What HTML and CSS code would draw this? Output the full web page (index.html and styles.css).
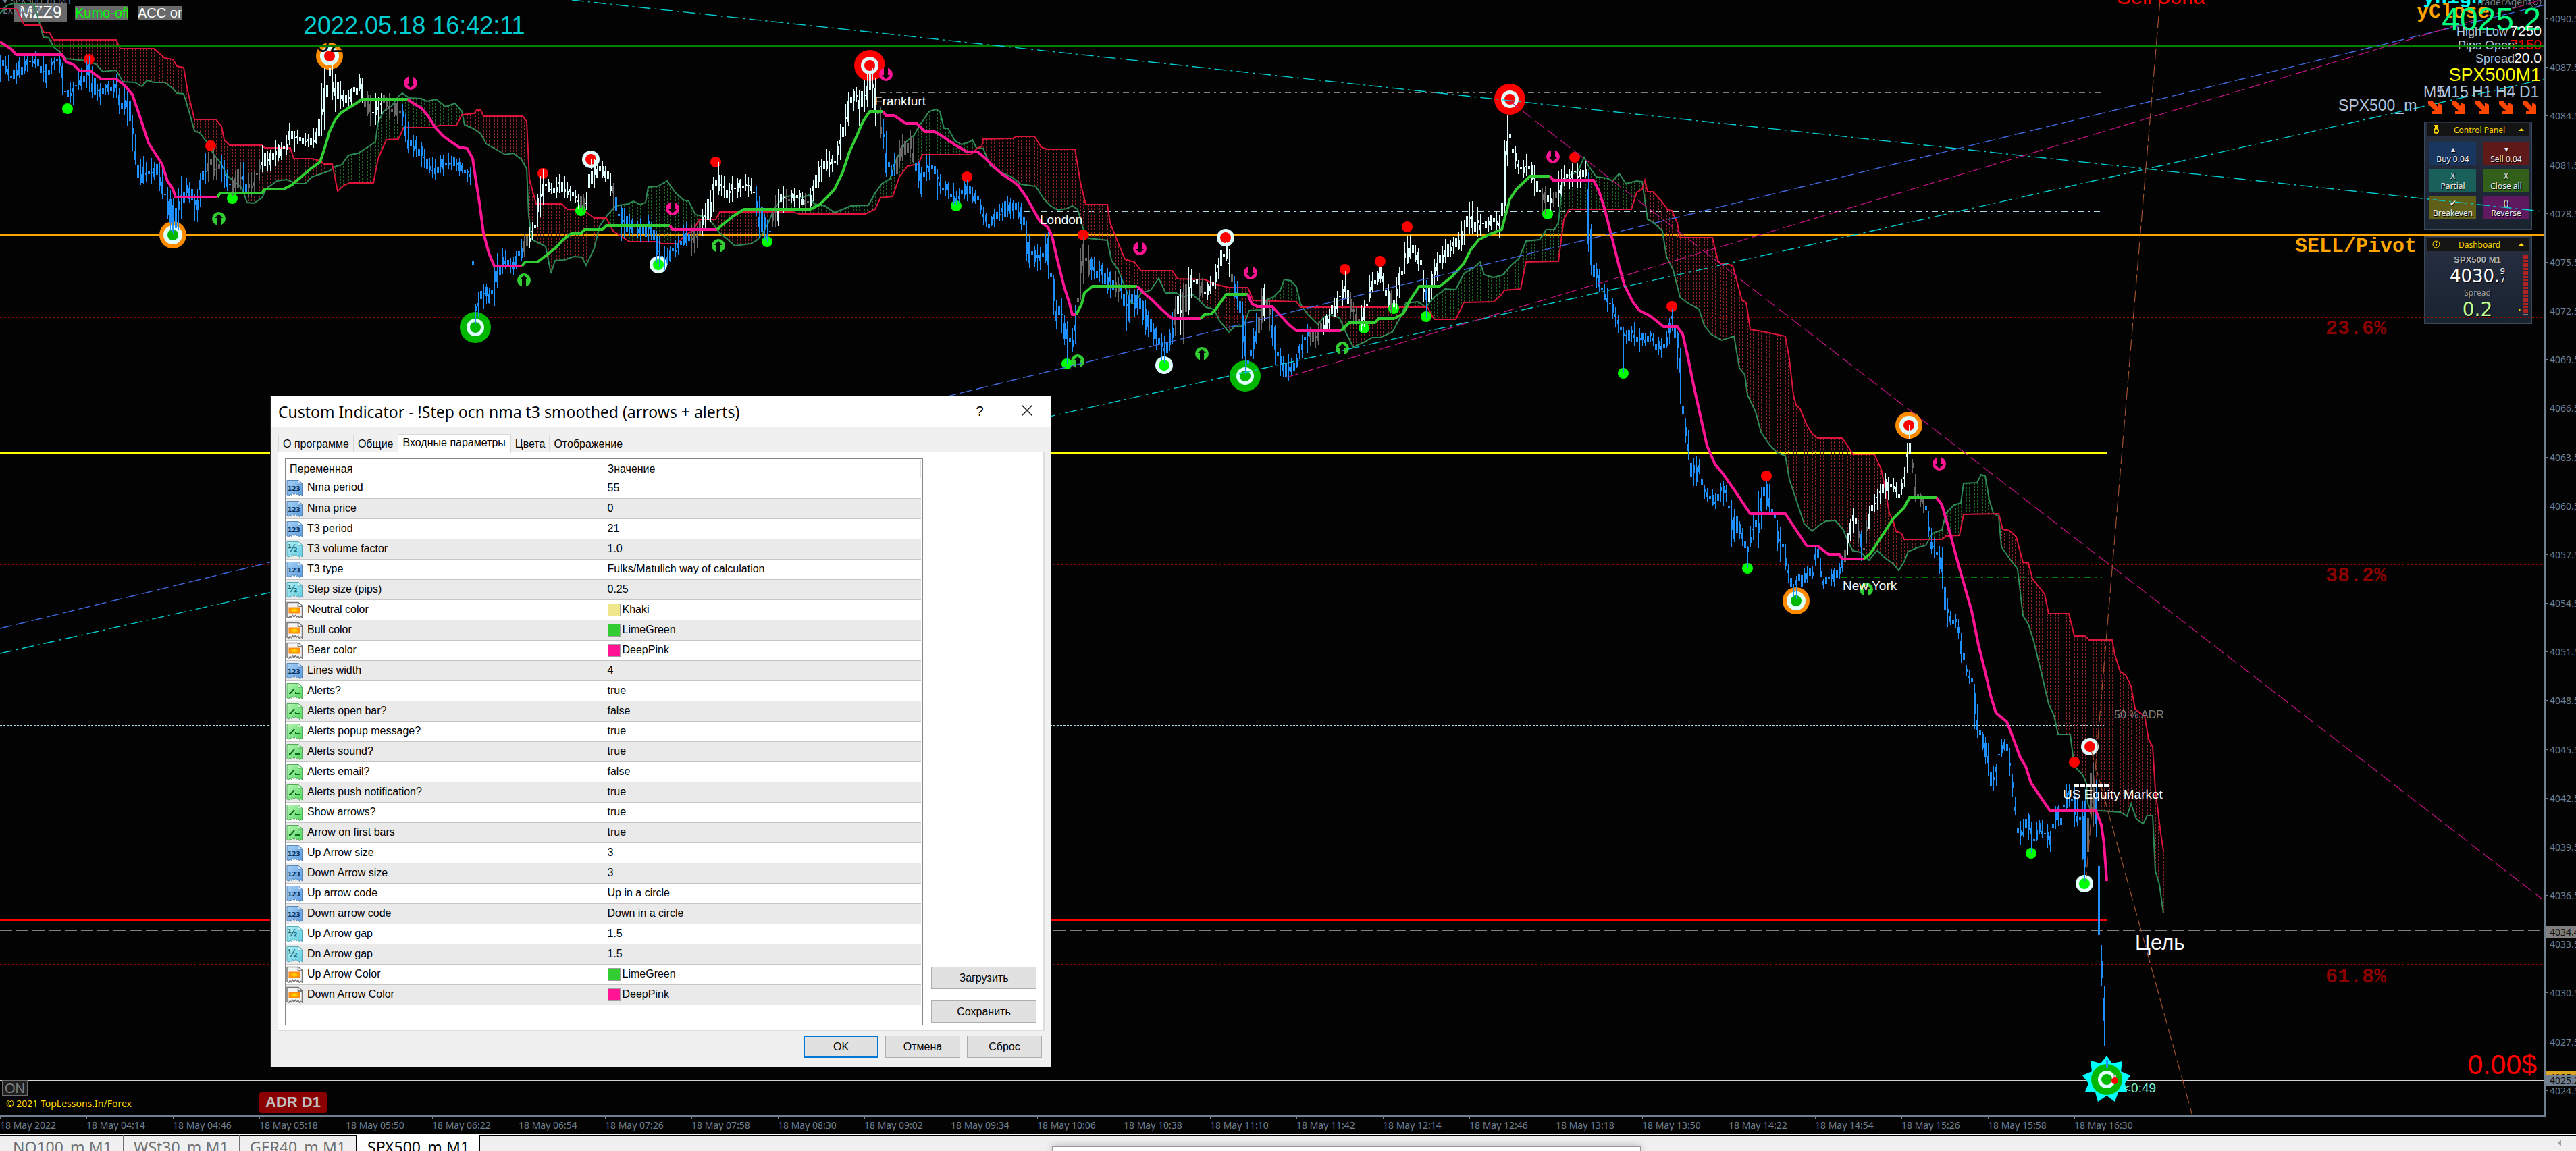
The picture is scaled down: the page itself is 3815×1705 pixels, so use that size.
FILE: index.html
```
<!DOCTYPE html>
<html lang="ru">
<head>
<meta charset="utf-8">
<title>SPX500_m,M1</title>
<link rel="stylesheet" href="styles.css">
</head>
<body>
<svg class="defs" aria-hidden="true">
  <defs>
    <linearGradient id="gb" x1="0" y1="0" x2="1" y2="1"><stop offset="0" stop-color="#a9d2f7"/><stop offset="1" stop-color="#5c9de0"/></linearGradient>
    <linearGradient id="gc" x1="0" y1="0" x2="1" y2="1"><stop offset="0" stop-color="#b4f0f5"/><stop offset="1" stop-color="#62cbe0"/></linearGradient>
    <linearGradient id="gg" x1="0" y1="0" x2="1" y2="1"><stop offset="0" stop-color="#b8f5b4"/><stop offset="1" stop-color="#52d862"/></linearGradient>
    <radialGradient id="go"><stop offset="0" stop-color="#ffe600"/><stop offset="1" stop-color="#ff8a00"/></radialGradient>
    <path id="sheet" d="M1 1.500H18L23.500 6V24L21 22L19.500 24.500L17.500 21L15.500 23L13.500 20.500L11.500 23L9.500 20.500L7.500 23.500L5.500 21.500L4 24L1 23Z"/>
    <symbol id="i-int" viewBox="0 0 25 25"><use href="#sheet" fill="url(#gb)" stroke="#5a86b4"/><path d="M17.500 2V7H23" fill="#d4e8fb" stroke="#5a86b4"/><text class="glyph" x="2" y="17" fill="#0c3358">123</text></symbol>
    <symbol id="i-dbl" viewBox="0 0 25 25"><use href="#sheet" fill="url(#gc)" stroke="#58a9b8"/><path d="M17.500 2V7H23" fill="#d8f6fa" stroke="#58a9b8"/><text class="glyph half" x="2" y="16" fill="#1b6f80">½</text></symbol>
    <symbol id="i-bool" viewBox="0 0 25 25"><use href="#sheet" fill="url(#gg)" stroke="#55a85c"/><path d="M17.500 2V7H23" fill="#dcf8da" stroke="#55a85c"/><path d="M4 16H6L12 9M14 14V16H20" fill="none" stroke="#0f6b1c" stroke-width="2"/></symbol>
    <symbol id="i-clr" viewBox="0 0 25 25"><use href="#sheet" fill="#f4f4f4" stroke="#777" stroke-width="1.500"/><path d="M17.500 2V7H23" fill="#fff" stroke="#555" stroke-width="1.500"/><rect x="4" y="9" width="16" height="8" fill="url(#go)" stroke="#ff8a1c"/></symbol>
    <g id="low"><circle r="8" fill="#00ff00"/></g>
    <g id="high"><circle r="8" fill="#ff0000"/></g>
    <g id="low2"><circle r="13" fill="#e0ffff"/><circle r="8" fill="#00ff00"/></g>
    <g id="high2"><circle r="13" fill="#e0ffff"/><circle r="8" fill="#ff0000"/></g>
    <g id="low3"><circle r="20" fill="#ff8c00"/><circle r="14" fill="#e0ffff"/><circle r="8" fill="#00b800"/></g>
    <g id="high3"><circle r="20" fill="#ff8c00"/><circle r="14" fill="#e0ffff"/><circle r="8" fill="#ff0000"/></g>
    <g id="low4"><circle r="23" fill="#00b800"/><circle r="13" fill="#e0ffff"/><circle r="8" fill="#00b800"/></g>
    <g id="high4"><circle r="23" fill="#ff0000"/><circle r="13" fill="#e0ffff"/><circle r="8" fill="#ff0000"/></g>
    <g id="up"><circle r="10" fill="#32cd32"/><path d="M-3 11V-1H-6L0 -7L6 -1H3V11Z" fill="#030303"/></g>
    <g id="down"><circle r="10" fill="#ff1493"/><path d="M-3 -11V1H-6L0 7L6 1H3V-11Z" fill="#030303"/></g>
    <path id="se" d="M0 0H6L14 9V3L20 6V20H5V15H10L0 5Z" fill="#ff4500"/>
  </defs>
</svg>

<main class="terminal">
  <section class="chart">
    <div class="plot">
      <div class="labels">
        <button class="tag tag-big">MZZ9</button>
        <button class="tag lime">Kumo-off</button>
        <button class="tag acc">ACC on</button>
      </div>

      <div class="panels">
        <section class="panel control">
          <header class="panel-head"><svg class="ico" viewBox="0 0 12 14"><path d="M3 1H9M4 3H8M6 5C10 6 10 12 6 12C2 12 2 6 6 5" fill="none" stroke="#ffd700" stroke-width="2"/></svg><h2>Control Panel</h2><span class="tri"></span></header>
          <div class="actions">
            <button class="buy"><i>▴</i>Buy 0.04</button>
            <button class="sell"><i>▾</i>Sell 0.04</button>
            <button class="partial"><i>X</i>Partial</button>
            <button class="close-all"><i>X</i>Close all</button>
            <button class="even"><i>✔</i>Breakeven</button>
            <button class="reverse"><i>()</i>Reverse</button>
          </div>
        </section>
        <section class="panel dash">
          <header class="panel-head"><svg class="ico" viewBox="0 0 12 14"><circle cx="6" cy="7" r="5" fill="none" stroke="#ffd700"/><path d="M6 3V5M6 6V10" stroke="#ffd700" stroke-width="2"/></svg><h2>Dashboard</h2><span class="tri"></span></header>
          <div class="dash-body">
            <div class="quote">
              <b>SPX500 M1</b>
              <p class="price">4030.<span><em>9</em><em>7</em></span></p>
              <small>Spread</small>
              <strong>0.2</strong>
            </div>
            <span class="marker"></span>
            <div class="meter"></div>
          </div>
        </section>
      </div>

      <svg class="canvas" viewBox="0 0 3768 1652">
        <g class="faint"><text x="4" y="6" class="ui">▾ SPX500_m,M1</text><text x="4" y="20" class="ui">ExtDepth: 21</text></g>
        <g class="levels">
          <path d="M0 348H3769" stroke="#ffa500" stroke-width="4"/>
          <path d="M0 671H3121" stroke="#ffff00" stroke-width="4"/>
          <path d="M0 1363H3121" stroke="#ff0000" stroke-width="4"/>
          <path d="M0 470.500H3769M0 836.500H3769M0 1428.500H3769" stroke="#8b0000" stroke-dasharray="3 3"/>
          <path d="M0 1074.500H3116" stroke="#add8e6" stroke-dasharray="3 2"/>
          <path d="M0 1378.500H3769" stroke="#808080" stroke-dasharray="18 6"/>
          <path d="M0 1595.500H3769" stroke="#daa520"/>
          <path d="M0 1600.500H3769" stroke="#d3d3d3"/>
          <path d="M1303 137.500H3114" stroke="#808080" stroke-dasharray="9 6 3 6"/>
          <path d="M1517 313.500H3114" stroke="#add8e6" stroke-dasharray="9 6 3 6"/>
          <path d="M2727 855.500H3113" stroke="#008000" stroke-dasharray="9 6 3 6"/>
        </g>
        <g id="cloud"></g>
        <g id="lines"></g>
        <g id="marks"></g>
        <path d="M3120 1564L3128 1575L3143 1572L3141 1587L3155 1593L3147 1605L3150 1617L3137 1618L3132 1632L3120 1623L3107 1632L3103 1618L3088 1617L3093 1605L3084 1593L3098 1587L3096 1571L3111 1575Z" fill="#00ffff"/>
        <use href="#low4" x="3120" y="1599"/>
        <path d="M3130 1592H3134V1600H3130Z" fill="#c0c0c0"/><circle cx="3132" cy="1601" r="5" fill="#ff0000"/>
        <g id="candles"></g>
        <text x="448" y="77" class="t36" fill="#030303">2022.05.18 16:42:11</text>
        <path d="M0 68H3769" stroke="#008000" stroke-width="4"/>
        <g id="average"></g>
        <g class="trend">
          <path d="M847 0L3769 313.500M0 968L3769 117" stroke="#00ced1" stroke-width="1.400" stroke-dasharray="18 6 3 6"/>
          <path d="M0 931L3769 7" stroke="#4169e1" stroke-width="1.400" stroke-dasharray="18 6"/>
          <path d="M1905 559L3763 0M2235 149L3765 1332" stroke="#c71585" stroke-width="1.200" stroke-dasharray="18 6"/>
          <path d="M3199 0L3089 1307M3096 1108L3247 1653" stroke="#a0522d" stroke-width="1.200" stroke-dasharray="18 6"/>
        </g>
        <path d="M3071 1164H3123" stroke="#fff" stroke-width="4" stroke-dasharray="8 1"/>
        <text x="450" y="50" class="t36" fill="#00ced1">2022.05.18 16:42:11</text>
        <g class="t19" fill="#fff">
          <text x="1295" y="156">Frankfurt</text><text x="1540" y="332">London</text>
          <text x="2729" y="874">New York</text><text x="3055" y="1183">US Equity Market</text>
        </g>
        <text x="3131" y="1064" class="t16" fill="#808080">50 % ADR</text>
        <text x="3162" y="1407" class="t31" fill="#fff">Цель</text>
        <text x="3135" y="6" class="t31" fill="#ff0000">Sell Зона</text>
        <text x="3145" y="1618" class="t19" fill="#7fffd4">&lt;0:49</text>
        <g class="mono" fill="#8b0000"><text x="3444" y="495">23.6%</text><text x="3444" y="861">38.2%</text><text x="3444" y="1455">61.8%</text></g>
        <g class="mono" fill="#ffa500"><text x="3399" y="373">SELL/Pivot</text><text x="3579" y="26">yClose</text><text x="3588" y="5" fill="#00ffff">yHigh</text></g>
        <text x="3667" y="8" class="ui" fill="#708090">TraderAgent</text>
        <g fill="none" stroke="#708090"><circle cx="3755" cy="3" r="8"/><path d="M3751 4Q3755 10 3759 4M3751 0H3753M3757 0H3759"/></g>
        <text x="3763" y="45" class="t48 end" fill="#00ff7f">4025.2</text>
        <g class="t18" fill="#b0c4de"><text x="3638" y="53">High-Low :</text><text x="3640" y="73">Pips Open:</text><text x="3666" y="93">Spread:</text></g>
        <g class="t21 end" fill="#fff"><text x="3764" y="53">7250</text><text x="3764" y="73" fill="#ff0000">-7150</text><text x="3764" y="93">20.0</text></g>
        <path d="M3630 68H3769" stroke="#008000" stroke-width="3"/>
        <text x="3763" y="120" class="t27 end" fill="#ffff00">SPX500M1</text>
        <g class="t23" fill="#b0c4de"><text x="3589" y="144">M5</text><text x="3611" y="144">M15</text><text x="3661" y="144">H1</text><text x="3696" y="144">H4</text><text x="3731" y="144">D1</text><text x="3463" y="164">SPX500_m</text></g>
        <use href="#se" x="3596" y="149"/><use href="#se" x="3631" y="149"/><use href="#se" x="3666" y="149"/><use href="#se" x="3701" y="149"/><use href="#se" x="3736" y="149"/>
        <text x="3757" y="1591" class="led end" fill="#ff0000">0.00$</text>
      </svg>

      <div class="corner">
        <button class="on">ON</button>
        <p>© 2021 TopLessons.In/Forex</p>
      </div>
      <span class="adr">ADR D1</span>
    </div>
    <aside class="prices">
      <span>4090.5</span><span>4087.5</span><span>4084.5</span><span>4081.5</span><span>4078.5</span><span>4075.5</span><span>4072.5</span><span>4069.5</span><span>4066.5</span><span>4063.5</span><span>4060.5</span><span>4057.5</span><span>4054.5</span><span>4051.5</span><span>4048.5</span><span>4045.5</span><span>4042.5</span><span>4039.5</span><span>4036.5</span><span>4033.5</span><span>4030.5</span><span>4027.5</span><span>4024.5</span>
      <mark class="level">4034.4</mark>
      <mark class="pending">4025.6</mark>
      <mark class="bid">4025.2</mark>
    </aside>
  </section>
  <div class="times">
    <span>18 May 2022</span><span>18 May 04:14</span><span>18 May 04:46</span><span>18 May 05:18</span><span>18 May 05:50</span><span>18 May 06:22</span><span>18 May 06:54</span><span>18 May 07:26</span><span>18 May 07:58</span><span>18 May 08:30</span><span>18 May 09:02</span><span>18 May 09:34</span><span>18 May 10:06</span><span>18 May 10:38</span><span>18 May 11:10</span><span>18 May 11:42</span><span>18 May 12:14</span><span>18 May 12:46</span><span>18 May 13:18</span><span>18 May 13:50</span><span>18 May 14:22</span><span>18 May 14:54</span><span>18 May 15:26</span><span>18 May 15:58</span><span>18 May 16:30</span>
  </div>
  <nav class="charts">
    <a href="#nq">NQ100_m,M1</a><a href="#ws">WSt30_m,M1</a><a href="#ger">GER40_m,M1</a><a href="#spx" class="current">SPX500_m,M1</a>
    <span class="scroll"></span>
  </nav>
  <div class="popup"></div>
</main>

<form class="dialog" role="dialog" aria-labelledby="dlg-title">
  <header class="dlg-head">
    <h1 id="dlg-title">Custom Indicator - !Step ocn nma t3 smoothed (arrows + alerts)</h1>
    <button type="button" class="win">?</button>
    <button type="button" class="win" aria-label="Закрыть"><svg viewBox="0 0 16 16" width="16" height="16"><path d="M0 0L16 16M16 0L0 16" stroke="#111" stroke-width="1.500"/></svg></button>
  </header>
  <div class="dlg-tabs" role="tablist">
    <button type="button" role="tab">О программе</button><button type="button" role="tab">Общие</button><button type="button" role="tab" aria-selected="true">Входные параметры</button><button type="button" role="tab">Цвета</button><button type="button" role="tab">Отображение</button>
  </div>
  <div class="dlg-page">
    <div class="list">
      <table>
        <thead><tr><th>Переменная</th><th>Значение</th></tr></thead>
        <tbody>
          <tr><td><svg><use href="#i-int"/></svg>Nma period</td><td>55</td></tr>
          <tr><td><svg><use href="#i-int"/></svg>Nma price</td><td>0</td></tr>
          <tr><td><svg><use href="#i-int"/></svg>T3 period</td><td>21</td></tr>
          <tr><td><svg><use href="#i-dbl"/></svg>T3 volume factor</td><td>1.0</td></tr>
          <tr><td><svg><use href="#i-int"/></svg>T3 type</td><td>Fulks/Matulich way of calculation</td></tr>
          <tr><td><svg><use href="#i-dbl"/></svg>Step size (pips)</td><td>0.25</td></tr>
          <tr><td><svg><use href="#i-clr"/></svg>Neutral color</td><td><i class="sw khaki"></i>Khaki</td></tr>
          <tr><td><svg><use href="#i-clr"/></svg>Bull color</td><td><i class="sw green"></i>LimeGreen</td></tr>
          <tr><td><svg><use href="#i-clr"/></svg>Bear color</td><td><i class="sw pink"></i>DeepPink</td></tr>
          <tr><td><svg><use href="#i-int"/></svg>Lines width</td><td>4</td></tr>
          <tr><td><svg><use href="#i-bool"/></svg>Alerts?</td><td>true</td></tr>
          <tr><td><svg><use href="#i-bool"/></svg>Alerts open bar?</td><td>false</td></tr>
          <tr><td><svg><use href="#i-bool"/></svg>Alerts popup message?</td><td>true</td></tr>
          <tr><td><svg><use href="#i-bool"/></svg>Alerts sound?</td><td>true</td></tr>
          <tr><td><svg><use href="#i-bool"/></svg>Alerts email?</td><td>false</td></tr>
          <tr><td><svg><use href="#i-bool"/></svg>Alerts push notification?</td><td>true</td></tr>
          <tr><td><svg><use href="#i-bool"/></svg>Show arrows?</td><td>true</td></tr>
          <tr><td><svg><use href="#i-bool"/></svg>Arrow on first bars</td><td>true</td></tr>
          <tr><td><svg><use href="#i-int"/></svg>Up Arrow size</td><td>3</td></tr>
          <tr><td><svg><use href="#i-int"/></svg>Down Arrow size</td><td>3</td></tr>
          <tr><td><svg><use href="#i-int"/></svg>Up arrow code</td><td>Up in a circle</td></tr>
          <tr><td><svg><use href="#i-int"/></svg>Down arrow code</td><td>Down in a circle</td></tr>
          <tr><td><svg><use href="#i-dbl"/></svg>Up Arrow gap</td><td>1.5</td></tr>
          <tr><td><svg><use href="#i-dbl"/></svg>Dn Arrow gap</td><td>1.5</td></tr>
          <tr><td><svg><use href="#i-clr"/></svg>Up Arrow Color</td><td><i class="sw green"></i>LimeGreen</td></tr>
          <tr><td><svg><use href="#i-clr"/></svg>Down Arrow Color</td><td><i class="sw pink"></i>DeepPink</td></tr>
        </tbody>
      </table>
    </div>
    <div class="side"><button type="button" class="btn">Загрузить</button><button type="button" class="btn">Сохранить</button></div>
  </div>
  <footer class="dlg-foot"><button type="submit" class="btn primary">OK</button><button type="button" class="btn">Отмена</button><button type="reset" class="btn">Сброс</button></footer>
</form>
<script src="chart.js"></script>
</body>
</html>
```
FILE: styles.css
```
* { box-sizing: border-box; }
html, body { height: 100%; }
body { margin: 0; background: #030303; font-family: "Liberation Sans", Arial, sans-serif; overflow: hidden; }
h1, h2, p { margin: 0; font-weight: normal; }
button { font: inherit; border: 0; padding: 0; }
.defs { position: absolute; width: 0; height: 0; }

.terminal { position: relative; display: flex; flex-direction: column; height: 100%; }
.chart { display: flex; flex: 1; min-height: 0; }
.plot { position: relative; flex: 1; min-width: 0; border-right: 2px solid #708090; border-bottom: 2px solid #708090; overflow: hidden; }
.canvas { position: absolute; left: 0; top: 0; width: 100%; height: 100%; pointer-events: none; }
.levels path, .trend path { fill: none; }

.t16 { font-size: 16px; }
.t18 { font-size: 18px; }
.t19 { font-size: 19px; }
.t21 { font-size: 21px; }
.t23 { font-size: 23px; }
.t27 { font-size: 27px; }
.t31 { font-size: 31px; }
.t36 { font-size: 36px; }
.t48 { font-size: 48px; }
.end { text-anchor: end; }
.mono { font: bold 30px "Liberation Mono", "Courier New", monospace; }
.ui { font: 14px "Noto Sans", Tahoma, sans-serif; }
.led { font: 41px "Liberation Sans", sans-serif; }
.faint { fill: #708090; }
.glyph { font: bold 9px "DejaVu Sans", sans-serif; }
.half { font-size: 14px; }

.labels { position: absolute; left: 21px; top: 4px; display: flex; align-items: flex-start; gap: 12px; }
.tag { width: 78px; height: 20px; margin-top: 5px; overflow: hidden; background: #696969; color: #fff; font-size: 20px; line-height: 20px; white-space: nowrap; text-align: left; }
.tag-big { height: 28px; margin-top: 0; font-size: 24px; line-height: 28px; text-align: center; }
.lime { color: #00ff00; }
.acc { width: 65px; margin-left: 3px; }

.panels { position: absolute; right: 18px; top: 180px; width: 160px; display: flex; flex-direction: column; gap: 10px; font-family: "Noto Sans", Tahoma, sans-serif; }
.panel { border: 1px solid #3a4a5e; background: linear-gradient(#272f42, #1a2330); padding: 1px 4px; }
.control { height: 160px; }
.dash { height: 130px; }
.panel-head { display: flex; align-items: center; height: 20px; padding: 0 7px; background: #141414; color: #ffd700; }
.panel-head h2 { flex: 1; text-align: center; font-size: 12px; }
.ico { width: 12px; height: 14px; }
.tri { border: 4px solid transparent; border-top: 0; border-bottom-color: #ffd700; }
.actions { display: grid; grid-template-columns: 1fr 1fr; grid-auto-rows: 35px; column-gap: 10px; row-gap: 5px; padding: 8px 0 0 3px; margin-right: -1px; }
.actions button { display: flex; flex-direction: column; align-items: center; justify-content: center; color: #eee; font-size: 12px; line-height: 15px; white-space: nowrap; text-shadow: 1px 1px #000; }
.actions i { font-style: normal; }
.buy { background: #19365f; }
.sell { background: #5f1919; }
.partial { background: #195f5a; }
.close-all { background: #325f19; }
.even { background: #5f5f19; }
.reverse { background: #5f195f; }
.dash-body { display: flex; padding: 5px 1px 0 0; }
.quote { flex: 1; display: flex; flex-direction: column; align-items: center; padding-left: 13px; text-shadow: 1px 1px #000; }
.quote b { color: #b0b0b0; font: bold 13px/16px "Liberation Sans", sans-serif; }
.price { display: flex; align-items: center; color: #fff; font: 26px/26px "DejaVu Sans", sans-serif; margin-top: 3px; }
.price span { display: flex; flex-direction: column; font-size: 12px; line-height: 13px; }
.price em { font-style: normal; }
.quote small { color: #a0a0a0; font-size: 12px; line-height: 16px; margin-top: 4px; }
.quote strong { color: #c0ff90; font: 28px/30px "DejaVu Sans", sans-serif; margin-top: 2px; }
.marker { align-self: flex-end; margin-bottom: 12px; border: 3px solid transparent; border-right: 0; border-left-color: #ffd700; }
.meter { width: 8px; height: 90px; margin-left: 3px; background: repeating-linear-gradient(#b22222 0 3px, #1f2837 3px 4px); border-bottom: 2px solid #808080; }

.corner { position: absolute; left: 3px; top: 1600px; color: #ffd700; font: 14px/20px "Noto Sans", Tahoma, sans-serif; }
.corner p { padding: 2px 0 0 6px; }
.on { display: block; width: 38px; height: 23px; border: 1px solid #707070; background: #202020; color: #808080; font: 20px/20px "Liberation Sans", sans-serif; }
.adr { position: absolute; left: 384px; top: 1618px; width: 100px; height: 30px; border-radius: 3px; background: #8b0000; color: #c0c0c0; font: bold 22px/30px "Liberation Sans", sans-serif; text-align: center; }

.prices { position: relative; display: flex; flex-direction: column; justify-content: space-between; width: 45px; padding: 18px 0 28px; overflow: hidden; color: #708090; font: 14px/20px "Noto Sans", Tahoma, sans-serif; }
.prices span { display: block; height: 20px; padding-left: 6px; background: linear-gradient(#708090, #708090) 0 9px / 3px 1px no-repeat; }
.prices mark { position: absolute; left: 1px; width: 44px; height: 17px; padding-left: 5px; line-height: 17px; color: #111; }
.prices .level { top: 1372px; background: #808080; }
.prices .pending { top: 1587px; background: #daa520; }
.prices .bid { top: 1592px; background: #708090; }

.times { display: flex; height: 26px; color: #708090; font: 14px/26px "Noto Sans", Tahoma, sans-serif; }
.times span { width: 128px; background: linear-gradient(#708090, #708090) 0 0 / 1px 3px no-repeat; white-space: nowrap; }
.charts { display: flex; height: 25px; border-top: 2px solid #fff; background: #f0f0f0; box-shadow: inset 0 1px #000; overflow: hidden; font: 23px/24px "Noto Sans", "Segoe UI", sans-serif; }
.charts a { flex: 0 0 172px; height: 40px; padding: 5px 0 0 15px; color: #707070; text-decoration: none; border-right: 1px solid #707070; white-space: nowrap; }
.charts a:first-child { flex-basis: 183px; padding-left: 19px; }
.charts a:nth-child(3) { border-right: 0; }
.charts .current { flex-basis: 184px; padding-left: 16px; background: #fff; color: #000; border: solid #000; border-width: 0 2px 0 1px; }
.scroll { margin: 6px 22px 0 auto; height: 0; border: 5px solid transparent; border-left: 0; border-right-color: #a0a0a0; }
.popup { position: absolute; left: 1558px; bottom: 0; width: 872px; height: 7px; background: #fff; border: 1px solid #999; border-bottom: 0; box-shadow: 0 0 12px rgba(0, 0, 0, .35); }

.dialog { position: absolute; left: 401px; top: 587px; width: 1155px; background: #f0f0f0; color: #000; font-size: 16px; box-shadow: 0 0 0 1px #222; padding-bottom: 13px; }
.dlg-head { display: flex; align-items: center; height: 45px; padding-left: 11px; background: #fff; }
.dlg-head h1 { flex: 1; font: 23px/30px "Noto Sans", "Segoe UI", sans-serif; }
.win { width: 70px; background: none; font-size: 20px; }
.dlg-tabs { display: flex; align-items: flex-end; height: 38px; padding-left: 11px; }
.dlg-tabs button { height: 26px; padding: 0 6px; border: 1px solid #d9d9d9; border-bottom: 0; border-left-width: 0; background: #f0f0f0; font-size: 16px; white-space: nowrap; }
.dlg-tabs button:first-child { border-left-width: 1px; }
.dlg-tabs [aria-selected] { height: 28px; padding: 0 7px 3px; background: #fff; margin-bottom: -1px; }
.dlg-page { display: flex; gap: 12px; margin: -1px 9px 7px 10px; padding: 9px 10px 7px 10px; background: #fff; border: 1px solid #dcdcdc; border-right-width: 2px; }
.list { flex: 1; min-height: 840px; border: 1px solid #828790; padding: 1px 2px 0 1px; }
table { width: 100%; border-collapse: collapse; table-layout: fixed; }
th, td { height: 30px; padding: 0 0 0 5px; text-align: left; font-weight: normal; line-height: 20px; }
th { height: 27px; border-right: 1px solid #e0e0e0; }
th:first-child { width: 470px; }
td { border-bottom: 1px solid #c6c6c6; }
td:first-child { padding-left: 0; border-right: 1px solid #c6c6c6; }
tr:nth-child(even) td { background: #eaeaea; }
td svg { width: 25px; height: 25px; margin: 0 6px 0 0; vertical-align: middle; }
.sw { display: inline-block; width: 19px; height: 19px; margin-right: 3px; border: 1px solid #a0a0a0; vertical-align: middle; }
.khaki { background: #f0e68c; }
.green { background: #32cd32; }
.pink { background: #ff1493; }
.side { width: 156px; display: flex; flex-direction: column; justify-content: flex-end; gap: 17px; padding-bottom: 4px; }
.btn { height: 33px; background: #e1e1e1; border: 1px solid #adadad; }
.dlg-foot { display: flex; justify-content: flex-end; gap: 10px; padding-right: 13px; }
.dlg-foot .btn { width: 111px; }
.dlg-foot .primary { border: 2px solid #0078d7; }
```
FILE: chart.js
```
const NS = 'http://www.w3.org/2000/svg';
const BAR = 4;

function add(id, tag, attrs) {
  const el = document.createElementNS(NS, tag);
  for (const k in attrs) el.setAttribute(k, attrs[k]);
  document.getElementById(id).appendChild(el);
}
const parse = s => s.trim().split(/\s+/).map(p => p.split(',').map((v, i) => i < 3 ? Number(v) : v));

function at(points, x, i) {
  let k = 0;
  while (k < points.length - 2 && points[k + 1][0] <= x) k++;
  const a = points[k], b = points[k + 1];
  return a[i] + (b[i] - a[i]) * Math.min(1, Math.max(0, (x - a[0]) / (b[0] - a[0])));
}

// Ichimoku spans
const spanA = parse(`0,20 10,8 20,5 50,5 58,32 64,55 72,56 80,70 90,78 98,87 128,90 142,95 152,106 172,104 182,121 200,122 210,128 218,119 228,122 244,122 256,131 262,138 272,139 280,165 288,194 296,197 306,210 316,228 326,240 336,260 348,270 358,278 366,300 376,301 388,293 394,280 410,268 424,266 440,272 452,272 462,262 474,258 488,253 496,247 506,244 516,230 530,227 546,217 556,210 560,180 568,165 580,157 590,143 596,138 606,145 624,146 632,150 646,147 660,158 674,153 684,165 688,185 700,190 712,198 720,213 736,222 748,229 760,227 772,236 780,250 783,320 788,355 808,365 816,405 822,386 836,385 850,380 862,381 868,393 880,368 888,335 900,318 912,305 930,302 938,298 948,303 956,300 960,277 974,276 988,268 1000,285 1012,296 1020,298 1030,318 1048,322 1056,332 1066,345 1078,355 1088,364 1112,361 1122,355 1130,345 1138,330 1146,310 1160,292 1172,290 1184,294 1198,289 1206,302 1222,305 1236,315 1260,305 1286,304 1296,286 1306,272 1318,265 1328,235 1342,210 1354,200 1362,185 1368,177 1376,165 1386,162 1392,165 1398,190 1404,190 1414,208 1424,214 1436,210 1440,207 1446,219 1456,220 1466,245 1480,254 1498,262 1512,273 1534,276 1546,295 1556,305 1566,311 1580,309 1588,305 1596,310 1604,338 1612,353 1640,356 1646,385 1656,400 1666,425 1676,450 1680,450 1690,434 1704,430 1716,412 1726,434 1742,434 1752,440 1766,436 1776,445 1786,455 1798,458 1806,475 1820,492 1828,484 1842,483 1850,460 1868,459 1876,444 1886,440 1896,430 1902,414 1912,416 1920,425 1926,450 1936,465 1952,481 1960,470 1970,466 1984,471 1992,490 2004,514 2020,507 2032,500 2044,500 2062,492 2074,470 2082,449 2100,447 2112,455 2124,440 2134,433 2140,428 2156,429 2168,405 2182,397 2192,388 2198,407 2212,411 2226,407 2236,395 2250,382 2260,357 2280,355 2290,340 2302,340 2308,330 2314,272 2322,260 2336,255 2346,233 2352,245 2364,262 2380,264 2388,268 2398,257 2408,272 2424,268 2432,269 2440,325 2448,329 2462,342 2468,380 2478,400 2488,440 2498,448 2516,458 2524,482 2534,495 2550,504 2568,498 2576,545 2584,555 2588,585 2600,610 2608,640 2620,658 2632,671 2644,675 2650,710 2660,740 2672,776 2684,787 2694,778 2704,772 2718,771 2730,785 2736,800 2744,816 2756,818 2768,830 2780,815 2792,827 2804,835 2812,845 2820,832 2826,817 2840,811 2852,808 2862,790 2876,785 2882,760 2894,748 2904,745 2908,716 2928,715 2934,703 2940,705 2946,740 2952,760 2960,765 2964,810 2978,830 2988,843 2996,912 3004,925 3012,950 3024,1000 3034,1043 3042,1060 3048,1088 3066,1088 3072,1135 3084,1147 3090,1160 3092,1190 3096,1200 3110,1201 3140,1203 3150,1209 3156,1191 3164,1213 3174,1220 3180,1208 3188,1208 3192,1290 3198,1310 3204,1353`);
const spanB = parse(`0,13 24,13 36,37 60,37 65,48 73,48 79,59 172,59 178,72 228,72 244,86 256,88 262,98 272,100 278,135 288,177 320,177 328,187 332,207 340,215 388,215 392,219 430,219 435,235 462,235 474,238 480,243 492,243 500,283 510,274 518,271 553,271 560,235 572,207 590,206 598,189 640,189 650,186 676,186 684,170 702,168 706,163 712,163 716,172 774,172 780,180 784,265 794,302 832,302 840,310 864,311 880,323 898,323 908,342 920,350 932,358 974,358 980,361 1004,361 1014,348 1026,342 1036,325 1060,325 1066,314 1174,314 1184,317 1282,317 1296,310 1304,293 1322,291 1332,262 1344,246 1360,243 1366,229 1438,229 1448,219 1454,217 1456,206 1500,205 1506,202 1532,202 1542,218 1550,221 1592,221 1600,270 1608,303 1640,303 1644,330 1656,360 1666,384 1680,388 1690,401 1736,401 1744,413 1784,414 1800,421 1820,426 1848,426 1856,445 1920,447 1926,455 2114,455 2124,473 2156,473 2168,448 2212,447 2224,436 2228,430 2252,428 2260,388 2308,387 2316,325 2324,310 2416,310 2424,285 2432,280 2436,267 2440,284 2448,284 2460,297 2470,311 2476,312 2484,330 2488,352 2536,352 2544,385 2548,390 2566,393 2580,445 2586,448 2592,488 2610,491 2644,498 2650,532 2656,585 2660,600 2666,606 2676,630 2684,643 2692,649 2728,649 2736,660 2744,673 2776,673 2786,695 2792,725 2798,760 2804,772 2808,787 2816,790 2820,799 2876,799 2882,794 2902,793 2908,762 2960,761 2966,784 2976,786 2986,795 2996,833 3004,834 3010,857 3028,880 3034,909 3064,909 3072,942 3088,942 3094,948 3128,948 3132,970 3140,995 3148,1000 3156,1016 3162,1050 3168,1055 3176,1060 3182,1095 3188,1106 3192,1170 3200,1235 3204,1260`);

let redHatch = '', greenHatch = '';
for (let x = 64; x <= 3204; x += BAR) {
  const a = Math.round(at(spanA, x, 1)), b = Math.round(at(spanB, x, 1));
  if (b < a) redHatch += `M${x}.5 ${b}V${a}`; else greenHatch += `M${x}.5 ${a}V${b}`;
}
add('cloud', 'path', { d: redHatch, stroke: '#8b2226', 'stroke-dasharray': '3 2', fill: 'none' });
add('cloud', 'path', { d: greenHatch, stroke: '#1f6422', 'stroke-dasharray': '3 2', fill: 'none' });
add('lines', 'polyline', { points: spanA.join(' '), stroke: '#2e8b57', 'stroke-width': 2, fill: 'none' });
add('lines', 'polyline', { points: spanB.join(' '), stroke: '#dc143c', 'stroke-width': 2, fill: 'none' });

// x, high, low, trend colour (w up, g neutral, b down)
const bars = parse(`0,82,117,b 6,85,105,b 16,95,128,b 24,100,115,b 30,83,115,b 45,84,95,b 55,85,100,b 60,90,110,b 68,95,128,b 78,85,105,b 86,82,92,b 92,95,140,b 98,130,160,b 104,125,150,b 112,120,135,b 120,105,130,b 130,88,125,b 138,110,140,b 146,130,150,b 155,125,140,b 165,120,135,b 172,120,140,b 178,140,175,b 185,140,170,b 192,145,185,b 197,180,225,b 205,240,275,b 215,240,270,b 225,240,265,b 232,240,262,b 240,250,290,b 247,275,320,b 254,300,345,b 262,290,345,b 270,265,310,b 277,265,290,b 284,280,315,b 290,290,330,b 297,255,300,b 305,235,265,g 312,217,255,g 320,235,265,g 328,230,265,b 336,250,280,b 344,265,290,g 350,250,285,g 358,245,280,b 366,255,290,g 374,265,290,g 382,240,265,g 388,225,250,w 400,222,250,w 410,215,240,w 420,210,230,w 428,190,215,w 436,195,212,w 446,195,215,w 456,200,217,w 466,198,216,w 472,175,205,w 478,110,200,w 484,90,160,w 490,95,130,w 496,110,160,w 505,135,160,w 515,135,155,w 525,125,150,w 532,115,135,w 540,130,160,g 550,145,185,w 558,145,175,w 568,140,160,g 578,150,170,g 595,155,175,b 602,175,225,b 610,200,230,b 620,205,235,b 630,225,250,b 640,240,262,b 650,235,255,b 660,235,250,b 672,230,250,b 680,240,255,b 690,250,260,b 698,255,275,b 700,304,460,b 704,450,468,b 712,425,455,b 718,420,450,b 726,430,450,b 732,400,440,b 738,370,415,b 748,380,395,b 760,385,405,b 768,370,390,b 776,350,375,g 784,340,360,w 792,320,350,w 800,265,320,w 806,255,290,w 812,270,285,w 820,275,288,w 828,260,285,w 840,275,290,w 850,280,295,w 858,290,315,g 868,290,310,w 874,240,290,w 882,235,265,w 890,245,260,w 900,250,270,w 907,270,295,g 912,290,330,b 920,305,345,b 930,320,345,b 940,325,345,b 950,330,360,b 960,325,350,b 966,335,350,b 974,345,395,b 984,370,395,b 994,365,385,b 1004,350,375,b 1014,340,360,b 1024,335,370,g 1034,335,360,g 1040,310,345,w 1052,285,325,w 1060,240,290,w 1068,260,285,w 1078,275,300,w 1090,265,290,w 1100,265,285,w 1110,265,280,w 1118,280,295,b 1122,285,345,b 1130,310,345,b 1138,345,360,b 1144,310,335,g 1152,290,335,w 1156,268,310,w 1162,280,310,g 1170,285,300,w 1182,285,300,w 1190,285,305,g 1198,290,310,w 1208,250,290,w 1216,235,260,w 1226,230,250,w 1236,230,250,w 1242,200,240,w 1250,160,205,w 1260,135,175,w 1268,130,150,w 1274,135,200,w 1280,120,165,w 1288,98,135,w 1294,105,170,w 1300,150,195,g 1308,185,215,b 1312,195,260,b 1320,245,260,b 1328,220,260,g 1334,205,235,g 1342,200,230,g 1350,200,235,g 1356,230,255,b 1364,250,290,b 1370,230,270,b 1380,235,260,b 1388,250,285,b 1396,270,290,b 1404,270,290,b 1414,285,305,b 1420,280,300,b 1430,265,290,b 1440,280,300,b 1448,285,300,b 1456,310,330,b 1464,325,340,b 1472,315,330,b 1480,305,325,b 1490,295,320,b 1500,300,320,b 1510,300,325,b 1516,310,370,b 1524,350,395,b 1534,370,390,b 1542,370,395,b 1550,340,385,b 1556,375,450,b 1564,450,480,b 1572,450,490,b 1578,475,520,b 1590,490,515,b 1594,430,500,g 1600,370,440,g 1606,350,400,g 1614,380,410,b 1622,385,410,b 1632,390,420,b 1640,400,435,b 1650,405,440,g 1660,415,440,b 1668,430,485,b 1680,430,460,b 1688,440,470,b 1696,450,490,b 1706,475,500,b 1716,490,520,b 1724,500,535,b 1732,490,520,b 1740,450,490,g 1744,430,465,w 1750,430,510,g 1758,400,470,w 1766,405,425,w 1774,405,440,g 1784,425,440,w 1792,415,435,w 1800,395,420,w 1808,370,395,w 1816,360,385,w 1822,375,420,g 1828,410,440,b 1836,440,470,b 1842,460,555,b 1850,525,550,b 1856,490,530,b 1862,470,500,g 1870,412,475,w 1876,440,470,g 1884,455,510,b 1892,510,555,b 1902,535,560,b 1910,535,558,b 1920,530,545,b 1926,500,525,b 1934,490,510,b 1940,485,510,g 1950,490,515,g 1958,475,495,w 1964,465,490,w 1974,445,475,w 1984,430,450,w 1992,405,440,w 1998,430,460,g 2006,455,475,g 2014,465,490,w 2022,445,480,w 2030,410,435,w 2038,405,425,w 2044,395,415,w 2052,420,440,w 2058,435,460,g 2064,430,460,w 2072,400,435,w 2080,360,400,w 2088,355,380,w 2096,365,385,w 2104,380,410,w 2110,420,465,b 2114,420,460,w 2124,390,425,w 2134,370,400,w 2144,360,380,w 2154,350,375,w 2164,340,365,w 2172,315,360,w 2178,295,335,w 2186,310,350,w 2194,320,345,w 2204,325,340,w 2214,310,340,w 2222,325,350,w 2228,210,310,w 2234,162,210,w 2240,205,235,w 2246,235,250,w 2254,245,265,w 2260,230,260,w 2268,240,270,w 2276,260,285,w 2282,280,310,g 2290,280,305,w 2300,290,305,g 2308,265,305,w 2316,245,275,w 2324,250,275,w 2332,235,275,w 2342,255,275,w 2348,240,260,w 2352,255,370,b 2358,375,410,b 2366,395,420,b 2374,420,440,b 2382,435,460,b 2390,450,475,b 2398,475,500,b 2406,490,510,b 2416,485,505,b 2426,490,510,b 2436,495,510,b 2446,490,505,b 2452,500,525,b 2462,505,525,b 2470,485,510,b 2476,460,490,b 2482,480,520,b 2488,520,595,b 2490,560,630,b 2498,640,655,b 2504,655,710,b 2510,690,725,b 2516,685,700,b 2522,720,735,b 2532,725,745,b 2542,735,755,b 2550,715,735,b 2558,725,745,b 2564,745,810,b 2574,770,785,b 2582,790,815,b 2588,810,825,b 2594,770,800,b 2600,770,790,b 2604,730,810,b 2612,720,755,b 2618,715,750,b 2626,750,770,b 2634,780,825,b 2642,800,830,b 2648,840,860,b 2656,865,885,b 2664,845,880,b 2674,840,860,b 2684,840,855,b 2690,800,830,b 2700,860,870,b 2710,845,865,b 2720,840,860,b 2730,825,845,g 2736,790,820,w 2742,760,790,w 2750,765,780,g 2754,785,830,b 2760,790,830,g 2766,765,790,w 2776,735,755,w 2784,720,740,w 2794,705,730,w 2802,715,725,w 2812,725,740,w 2820,700,720,w 2826,640,690,w 2832,680,700,g 2838,720,755,g 2846,735,745,g 2852,740,765,b 2860,785,820,b 2868,810,830,b 2876,815,870,b 2882,880,920,b 2888,905,925,b 2898,910,930,b 2904,940,980,b 2912,985,1000,b 2920,1000,1020,b 2924,1020,1080,b 2932,1075,1095,b 2940,1095,1125,b 2948,1130,1165,b 2954,1150,1170,b 2960,1100,1130,b 2968,1095,1110,b 2974,1100,1130,b 2978,1130,1165,b 2982,1165,1190,b 2988,1220,1240,b 2996,1220,1240,b 3004,1205,1245,b 3012,1230,1255,b 3020,1215,1235,b 3028,1230,1240,b 3036,1235,1255,b 3044,1195,1220,b 3052,1195,1225,b 3060,1165,1200,b 3066,1165,1190,b 3072,1165,1220,b 3078,1200,1225,b 3086,1190,1290,b 3092,1160,1270,g 3096,1110,1210,g 3104,1165,1240,b 3108,1245,1415,b 3112,1400,1460,b 3116,1460,1550,b 3120,1556,1596,b`);

const colour = { w: '#e0ffff', g: '#696969', b: '#1e90ff' };
const shape = { w: '', g: '', b: '' };
let seed = 7;
const rnd = () => (seed = (seed * 16807) % 2147483647) / 2147483647;
for (let x = 0; x <= 3120; x += BAR) {
  let k = 0;
  while (k < bars.length - 1 && bars[k + 1][0] <= x) k++;
  const top = at(bars, x, 1), bottom = at(bars, x, 2), span = bottom - top;
  const o = Math.round(top + span * rnd() * 0.6), c = Math.round(bottom - span * rnd() * 0.6);
  const reach = x < 3108 ? 14 : 0;
  const h = Math.round(top - rnd() * rnd() * reach), l = Math.round(bottom + rnd() * rnd() * reach);
  shape[bars[k][3]] += `M${x - 1} ${Math.min(o, c)}h3V${Math.max(o, c, Math.min(o, c) + 2)}h-3zM${x} ${h}h1V${l}h-1z`;
}
for (const k in shape) add('candles', 'path', { d: shape[k], fill: colour[k], 'fill-rule': 'nonzero', 'shape-rendering': 'crispEdges' });

// Single long wicks that end at a swing mark
add('candles', 'path', { d: 'M2404 500h1V553h-1zM2588 820h1V842h-1zM1580 510h1V539h-1zM3008 1240h1V1264h-1zM3087 1200h1V1305h-1z', fill: colour.b });
add('candles', 'path', { d: 'M2236 150h1V170h-1zM488 85h1V100h-1zM875 236h1V250h-1zM1815 352h1V365h-1zM2827 630h1V650h-1z', fill: colour.w });

// Smoothed step average, split where the trend flips
const average = [
  ['p', '0,62 8,67 16,72 24,81 92,81 98,92 108,95 118,105 134,105 150,117 172,117 184,126 196,140 208,175 220,212 240,243 248,268 256,280 260,292 322,292'],
  ['g', '322,292 326,286 388,286 392,280 420,280 432,274 446,262 460,250 474,240 480,222 488,195 496,178 504,168 516,160 526,154 536,147 604,147'],
  ['p', '604,147 612,153 624,160 634,172 644,188 656,201 668,210 680,218 692,220 700,235 704,262 710,300 716,345 724,375 732,394 773,394'],
  ['g', '773,394 778,388 796,388 812,376 824,366 834,355 846,346 860,346 866,340 892,340 898,334 992,334'],
  ['p', '992,334 996,340 1062,340'],
  ['g', '1062,340 1070,333 1086,320 1102,310 1200,310 1214,303 1224,293 1236,280 1248,255 1258,225 1268,203 1278,180 1288,165 1308,165'],
  ['p', '1308,165 1312,171 1324,171 1342,183 1358,183 1370,195 1384,195 1396,202 1412,213 1432,225 1448,225 1460,235 1470,245 1484,258 1498,267 1508,275 1520,292 1530,310 1540,328 1552,337 1558,350 1566,385 1576,425 1584,450 1588,466 1594,466'],
  ['g', '1594,466 1602,450 1606,434 1618,424 1684,424'],
  ['p', '1684,424 1696,436 1706,444 1720,458 1736,472 1778,472'],
  ['g', '1778,472 1784,466 1794,465 1802,456 1816,436 1848,436'],
  ['p', '1848,436 1854,450 1862,454 1884,454 1894,465 1900,471 1908,480 1920,490 1986,490'],
  ['g', '1986,490 1998,478 2036,478 2042,472 2064,472 2078,465 2088,445 2102,424 2132,424 2150,410 2168,390 2178,370 2190,355 2206,347 2224,340 2236,295 2246,280 2266,261 2296,261'],
  ['p', '2296,261 2300,267 2360,267 2368,283 2376,308 2388,355 2398,395 2406,423 2418,447 2428,460 2444,468 2464,484 2484,484 2492,495 2500,530 2508,570 2518,615 2528,660 2540,688 2552,702 2570,728 2592,761 2644,761 2660,785 2676,809 2692,809 2708,821 2724,821 2728,828 2760,828'],
  ['g', '2760,828 2770,820 2804,768 2820,752 2828,737 2868,737'],
  ['p', '2868,737 2876,748 2888,790 2900,835 2910,870 2920,905 2930,955 2940,995 2948,1030 2956,1056 2972,1069 2982,1095 2992,1122 3000,1135 3008,1160 3036,1201 3104,1201 3112,1222 3116,1250 3120,1305']
];
for (const [c, points] of average)
  add('average', 'polyline', { points, stroke: c === 'p' ? '#ff1493' : '#32cd32', 'stroke-width': 4, fill: 'none' });

const marks = {
  high: '132,88 312,216 804,257 1060,240 1432,262 1604,348 1992,399 2044,387 2084,336 2332,233 2476,454 2616,705 3072,1129',
  low: '100,161 344,294 860,312 1136,358 1416,305 1580,539 2292,317 2064,457 2020,486 2112,469 2404,553 2588,842 3008,1264',
  high2: '875,236 1815,352 3095,1106',
  low2: '975,392 1724,541 3087,1309',
  high3: '488,83 2827,630',
  low3: '256,348 2660,890',
  high4: '1288,97 2236,147',
  low4: '704,485 1844,557',
  down: '608,123 996,309 1312,110 1688,368 1852,404 2300,232 2872,687',
  up: '324,324 776,415 1064,364 1596,535 1780,524 1988,516 2764,873'
};
for (const k in marks)
  for (const [x, y] of parse(marks[k])) add('marks', 'use', { href: '#' + k, x, y });
```
